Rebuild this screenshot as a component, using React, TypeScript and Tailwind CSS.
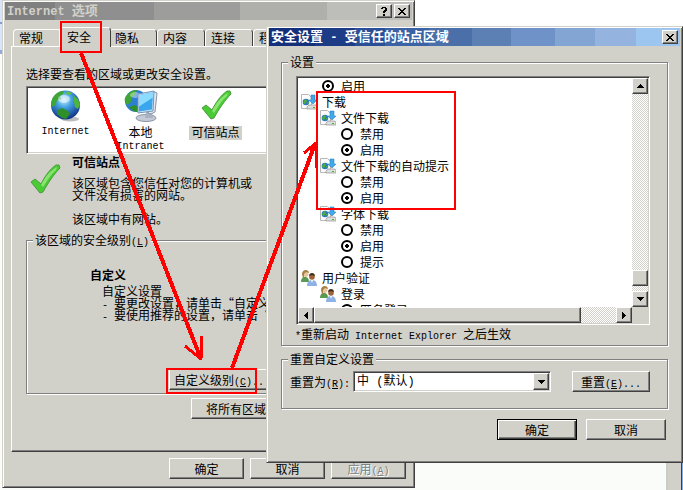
import { useState } from "react";
import type { ReactNode } from "react";
import clsx from "clsx";

const raised =
  "border border-t-white border-l-white border-r-[#404040] border-b-[#404040] bg-[#d2d1c9] shadow-[inset_-1px_-1px_0_#808080]";
const sunken =
  "border border-t-[#808080] border-l-[#808080] border-r-white border-b-white shadow-[inset_1px_1px_0_#404040,inset_-1px_-1px_0_#d2d1c9]";
const frame =
  "border border-t-[#d2d1c9] border-l-[#d2d1c9] border-r-[#404040] border-b-[#404040] bg-[#d2d1c9] p-px shadow-[inset_1px_1px_0_#fff,inset_-1px_-1px_0_#808080]";
const checker =
  "bg-[repeating-conic-gradient(#ffffff_0_25%,#d2d1c9_0_50%)] bg-[length:2px_2px]";

// Latin text inside the Chinese labels
const Mono = ({ children }: { children: ReactNode }) => (
  <span className="font-['Liberation_Mono',monospace] text-[10px] leading-0">
    {children}
  </span>
);

const Hotkey = ({ letter }: { letter: string }) => (
  <Mono>
    (<u>{letter}</u>)
  </Mono>
);

const Button = ({
  children,
  className,
  disabled,
}: {
  children: ReactNode;
  className?: string;
  disabled?: boolean;
}) => (
  <button
    type="button"
    disabled={disabled}
    className={clsx(
      "h-[21px] shrink-0 whitespace-nowrap leading-4",
      raised,
      disabled && "text-[#808080] [text-shadow:1px_1px_0_#fff]",
      className,
    )}
  >
    {children}
  </button>
);

const Group = ({
  legend,
  children,
  className,
}: {
  legend: ReactNode;
  children: ReactNode;
  className?: string;
}) => (
  <fieldset
    className={clsx(
      "min-w-0 border border-[#808080] shadow-[1px_1px_0_#fff,inset_1px_1px_0_#fff]",
      className,
    )}
  >
    <legend className="h-4 bg-[#d2d1c9] px-0.5 leading-4">{legend}</legend>
    {children}
  </fieldset>
);

const CaptionButton = ({
  label,
  children,
}: {
  label: string;
  children: ReactNode;
}) => (
  <button
    type="button"
    aria-label={label}
    className={clsx("flex h-3.5 w-4 items-center justify-center", raised)}
  >
    {children}
  </button>
);

const CloseGlyph = () => (
  <svg width="8" height="7" viewBox="0 0 8 7" shapeRendering="crispEdges">
    <path
      d="M0 0h2v1h1v1h2v-1h1v-1h2v1h-1v1h-1v1h-1v1h1v1h1v1h1v1h-2v-1h-1v-1h-2v1h-1v1h-2v-1h1v-1h1v-1h1v-1h-1v-1h-1v-1h-1z"
      fill="#000"
    />
  </svg>
);

const HelpGlyph = () => (
  <svg width="7" height="9" viewBox="0 0 7 9" shapeRendering="crispEdges">
    <path
      d="M1 0h4v1h1v3h-1v1h-1v1h-2v-2h1v-1h1v-2h-2v1h-2v-1h1zM2 7h2v2h-2z"
      fill="#000"
    />
  </svg>
);

const Globe = () => (
  <svg width="32" height="32" viewBox="0 0 32 32">
    <defs>
      <radialGradient id="sea" cx="45%" cy="32%" r="65%">
        <stop offset="0" stopColor="#c4efff" />
        <stop offset="0.4" stopColor="#45a3e0" />
        <stop offset="1" stopColor="#12398c" />
      </radialGradient>
    </defs>
    <ellipse cx="20" cy="29" rx="9" ry="2.5" fill="#bdbdbd" />
    <circle cx="15.5" cy="15" r="14.5" fill="url(#sea)" />
    <path
      d="M4 6C7 2 11 1 14 1l-1 3-3 2 1 3-4 1-1 4-3 3-2-2c0-3 1-7 3-9z"
      fill="#3fa535"
    />
    <path d="M7 20l5-2 6 3 2 3-4 5-4-1-5-4z" fill="#2f8f2a" />
    <path d="M24 6l4 3 2 6-2 4-3-2-1-5z" fill="#4fb43b" />
    <path d="M17 1l5 2-2 2-4-1z" fill="#5fc04a" />
    <ellipse cx="14" cy="9" rx="6" ry="4" fill="#fff" opacity="0.5" />
  </svg>
);

const IntranetIcon = () => (
  <svg width="34" height="32" viewBox="0 0 34 32">
    <circle cx="12" cy="11" r="11" fill="#2f7fd0" />
    <path d="M3 5c3-4 7-5 10-5l-2 5-3 2-1 5-4 3-2-3c-1-3 0-5 2-7z" fill="#3fa535" />
    <path d="M5 17l6-2 4 3-2 4-4-1z" fill="#2f8f2a" />
    <ellipse cx="11" cy="5" rx="5" ry="3" fill="#fff" opacity="0.4" />
    <ellipse cx="22" cy="28" rx="10" ry="3.5" fill="#c5cbd6" stroke="#8c93a3" />
    <path d="M22 22h6l1 6h-8z" fill="#a9b2c2" />
    <path d="M28 3l3-1 2 1-2 19-4 2-3-1z" fill="#e3e8ef" stroke="#8793a8" />
    <path d="M14 4l16-3-1 20-15 2z" fill="#cfe2f2" stroke="#6f95bd" />
    <path d="M15 5l14-2.500-1 17-13 2z" fill="#3aa6ee" />
    <path d="M15 5l14-2.500v5l-14 9z" fill="#8bdcff" />
  </svg>
);

const CheckIcon = () => (
  <svg width="32" height="32" viewBox="0 0 32 32">
    <path
      d="M2 18l4-3 6 5C16 12 21 5 27 1h3l1 3C25 10 19 19 14 28l-3 1z"
      fill="#48cb35"
      stroke="#4d9b3e"
      strokeWidth="1"
    />
    <path d="M12 21C16 13 21 7 28 3l-1 3c-5 4-9 11-13 17z" fill="#8ae46f" />
  </svg>
);

const DownloadIcon = () => (
  <svg width="16" height="16" viewBox="0 0 16 16">
    <path d="M.5.5h7l3 3v11h-10z" fill="#fbfbfb" stroke="#b8b8b8" />
    <circle cx="5" cy="8" r="3.3" fill="#2b78c2" />
    <path d="M3 6l2-1 1 2-2 3-2-1zM6 8l2 0-1 3z" fill="#4dac3d" />
    <path d="M10 1h4v5h2l-4 4-4-4h2z" fill="#3fa9ea" stroke="#1c78b8" strokeWidth=".5" />
    <path d="M8 11h7l1 2v2H6v-2z" fill="#dedede" stroke="#8f8f8f" strokeWidth=".7" />
    <path d="M12 13.500h2" stroke="#3db82e" />
  </svg>
);

const UsersIcon = () => (
  <svg width="16" height="16" viewBox="0 0 16 16">
    <path d="M0 12c0-4 2-5 4-5s4 1 4 5z" fill="#5b9a52" />
    <circle cx="4.500" cy="4" r="3" fill="#e9c79a" />
    <path d="M1 4c0-5 7-5 7-1L5 2 3 4v4H2z" fill="#a58148" />
    <path d="M6 16c0-4 2-6 5-6s5 2 5 6z" fill="#8fb2e6" />
    <circle cx="11" cy="7" r="2.800" fill="#9c6238" />
    <path d="M8 6c0-4 6-4 6 0l-3-1z" fill="#3d2a1c" />
    <path d="M10 10l1 3 1-3z" fill="#fff" />
  </svg>
);

const tabs = ["常规", "安全", "隐私", "内容", "连接", "程序"];

const InternetOptions = () => (
  <section
    className={clsx("absolute top-0 left-0.5 w-[413px]", frame)}
    aria-label="Internet 选项"
  >
    <header className="mx-px flex h-[18px] items-center gap-0.5 bg-[linear-gradient(90deg,#808080_0_50px,#8f8f8f_50px_149px,#9d9d9b_149px_235px,#afb0ab_235px_322px,#bdbeba_322px)] pr-0.5 pl-0.5">
      <h1 className="flex-1 text-[13px] leading-4 font-bold text-[#d2d1c9]">
        <span className="font-['Liberation_Mono',monospace] text-xs">
          Internet{" "}
        </span>
        选项
      </h1>
      <CaptionButton label="帮助">
        <HelpGlyph />
      </CaptionButton>
      <CaptionButton label="关闭">
        <CloseGlyph />
      </CaptionButton>
    </header>

    <div className="px-[7px] pt-[7px] pb-[7px]">
      <div role="tablist" className="flex h-[19px] items-end pl-0.5">
        {tabs.map((tab) => {
          const selected = tab === "安全";
          return (
            <button
              key={tab}
              type="button"
              role="tab"
              aria-selected={selected}
              className={clsx(
                "shrink-0 rounded-t-sm border border-b-0 border-t-white border-l-white border-r-[#404040] bg-[#d2d1c9] text-left leading-4",
                selected
                  ? "relative -mx-0.5 -mb-px h-5 w-[52px] pb-0.5 pl-[7px]"
                  : "h-[17px] w-12 pl-[5px]",
              )}
            >
              {tab}
            </button>
          );
        })}
      </div>

      <div
        role="tabpanel"
        className={clsx("px-3.5 pt-[19px] pb-8", raised)}
      >
        <p className="leading-4">选择要查看的区域或更改安全设置。</p>
        <ul
          className={clsx("mt-1 flex h-[68px] bg-white px-px pt-[3px]", sunken)}
        >
          <li className="flex w-[75px] flex-col items-center gap-1">
            <Globe />
            <Mono>
              <span className="block leading-3">Internet</span>
            </Mono>
          </li>
          <li className="flex w-[75px] flex-col items-center gap-1 text-center">
            <IntranetIcon />
            <span>
              本地
              <br />
              <Mono>Intranet</Mono>
            </span>
          </li>
          <li className="flex w-[75px] flex-col items-center gap-1">
            <CheckIcon />
            <span className="bg-[#d2d1c9] px-0.5 pb-0.5">可信站点</span>
          </li>
        </ul>

        <div className="mt-0.5 flex gap-[11px] pl-[3px]">
          <div className="pt-2">
            <CheckIcon />
          </div>
          <div>
            <h2 className="font-bold">可信站点</h2>
            <p className="mt-[9px]">
              该区域包含您信任对您的计算机或
              <br />
              文件没有损害的网站。
            </p>
            <p className="mt-3">该区域中有网站。</p>
          </div>
        </div>

        <Group
          className="mt-[7px] px-1.5 pb-[3px]"
          legend={
            <>
              该区域的安全级别
              <Hotkey letter="L" />
            </>
          }
        >
          <h2 className="mt-[21px] ml-[57px] font-bold">自定义</h2>
          <div className="mt-1 ml-[69px] whitespace-nowrap">
            <p>自定义设置</p>
            <p>
              <Mono>- </Mono>要更改设置，请单击“自定义级别”
            </p>
            <p>
              <Mono>- </Mono>要使用推荐的设置，请单击“默认级别”
            </p>
          </div>
          <Button className="mt-12 ml-[136px] block w-[110px] pl-1 text-left">
            自定义级别
            <Hotkey letter="C" />
            <Mono>...</Mono>
          </Button>
        </Group>
        <Button className="mt-1 ml-auto block w-[200px] pl-3.5 text-left">
          将所有区域重置为默认级别
          <Hotkey letter="R" />
        </Button>
      </div>

      <footer className="mt-1.5 flex justify-end gap-1.5">
        <Button className="w-[75px]">确定</Button>
        <Button className="w-[75px]">取消</Button>
        <Button className="w-[75px]" disabled>
          应用
          <Hotkey letter="A" />
        </Button>
      </footer>
    </div>
  </section>
);

type Row = {
  level: 1 | 2 | 3;
  label: string;
  kind: "download" | "users" | "radio";
  group?: string;
  on?: boolean;
};

const rows: Row[] = [
  { level: 2, label: "启用", kind: "radio", group: "prev", on: true },
  { level: 1, label: "下载", kind: "download" },
  { level: 2, label: "文件下载", kind: "download" },
  { level: 3, label: "禁用", kind: "radio", group: "file" },
  { level: 3, label: "启用", kind: "radio", group: "file", on: true },
  { level: 2, label: "文件下载的自动提示", kind: "download" },
  { level: 3, label: "禁用", kind: "radio", group: "prompt" },
  { level: 3, label: "启用", kind: "radio", group: "prompt", on: true },
  { level: 2, label: "字体下载", kind: "download" },
  { level: 3, label: "禁用", kind: "radio", group: "font" },
  { level: 3, label: "启用", kind: "radio", group: "font", on: true },
  { level: 3, label: "提示", kind: "radio", group: "font" },
  { level: 1, label: "用户验证", kind: "users" },
  { level: 2, label: "登录", kind: "users" },
  { level: 3, label: "匿名登录", kind: "radio", group: "login" },
];

const indent = { 1: "pl-[3px]", 2: "pl-[22px]", 3: "pl-[41px]" };

const SettingRow = ({ row }: { row: Row }) => {
  const rowClass = clsx("flex h-4 items-center gap-[5px]", indent[row.level]);
  if (row.kind === "radio") {
    return (
      <label className={rowClass}>
        <span className="flex w-4 justify-center">
          <input
            type="radio"
            name={row.group}
            defaultChecked={row.on}
            className="h-3 w-3 appearance-none rounded-full border-2 border-black bg-white checked:bg-[radial-gradient(circle,#000_0_2px,#fff_2px)]"
          />
        </span>
        {row.label}
      </label>
    );
  }
  return (
    <div className={rowClass}>
      {row.kind === "download" ? <DownloadIcon /> : <UsersIcon />}
      {row.label}
    </div>
  );
};

const arrows = {
  up: "M3 0h1v1h1v1h1v1h1v1h-7v-1h1v-1h1v-1h1z",
  down: "M0 0h7v1h-1v1h-1v1h-1v1h-1v-1h-1v-1h-1v-1h-1z",
  left: "M4 0v7h-1v-1h-1v-1h-1v-1h-1v-1h1v-1h1v-1h1v-1z",
  right: "M0 0h1v1h1v1h1v1h1v1h-1v1h-1v1h-1v1h-1z",
};

const ArrowGlyph = ({ dir }: { dir: keyof typeof arrows }) => {
  const flat = dir === "up" || dir === "down";
  return (
    <svg
      width={flat ? 7 : 4}
      height={flat ? 4 : 7}
      viewBox={flat ? "0 0 7 4" : "0 0 4 7"}
      shapeRendering="crispEdges"
    >
      <path d={arrows[dir]} />
    </svg>
  );
};

const ScrollButton = ({
  dir,
  label,
}: {
  dir: keyof typeof arrows;
  label: string;
}) => (
  <button
    type="button"
    aria-label={label}
    className={clsx("flex size-4 shrink-0 items-center justify-center", raised)}
  >
    <ArrowGlyph dir={dir} />
  </button>
);

const SecuritySettings = () => {
  const [level, setLevel] = useState("medium");

  return (
    <section
      className={clsx("absolute top-[26px] right-0 left-[266px]", frame)}
      aria-label="安全设置"
    >
      <header className="mx-px flex h-[18px] items-center bg-[linear-gradient(90deg,#14307a_0_46px,#1d3c86_46px_86px,#2a4f96_86px_116px,#3a62a4_116px_160px,#4b6fa9_160px_203px,#5d80b4_203px_242px,#6f92c8_242px_286px,#82a5d4_286px_326px,#94b3de_326px_367px,#9cc6f0_367px)] px-0.5">
        <h1 className="flex-1 text-[13px] leading-4 font-bold text-white">
          安全设置
          <span className="font-['Liberation_Mono',monospace] text-xs">
            {" - "}
          </span>
          受信任的站点区域
        </h1>
        <CaptionButton label="关闭">
          <CloseGlyph />
        </CaptionButton>
      </header>

      <div className="px-[13px] pt-2 pb-[21px]">
        <Group className="pr-[17px] pb-[3px] pl-1.5" legend="设置">
          <div className={clsx("mt-1.5 ml-2 bg-[#d2d1c9] p-px", sunken)}>
            <div className="flex h-[229px]">
              <div className="h-full flex-1 overflow-hidden bg-white">
                {rows.map((row, i) => (
                  <SettingRow key={i} row={row} />
                ))}
              </div>
              <div className={clsx("flex w-4 flex-col", checker)}>
                <ScrollButton dir="up" label="向上" />
                <div className="flex-1" />
                <div className={clsx("mb-[5px] h-4", raised)} />
                <ScrollButton dir="down" label="向下" />
              </div>
            </div>
            <div className={clsx("mr-4 flex h-4", checker)}>
              <ScrollButton dir="left" label="向左" />
              <div className={clsx("flex-1", raised)} />
              <div className="w-[35px]" />
              <ScrollButton dir="right" label="向右" />
            </div>
          </div>
          <p className="mt-px ml-[7px] leading-4">
            <Mono>*</Mono>重新启动<Mono> Internet Explorer </Mono>之后生效
          </p>
        </Group>

        <Group
          className="mt-[5px] pr-[17px] pb-4 pl-1.5"
          legend="重置自定义设置"
        >
          <div className="mt-1 ml-0.5 flex items-center">
            <label htmlFor="reset-level" className="w-[63px]">
              重置为
              <Hotkey letter="R" />
              <Mono>:</Mono>
            </label>
            <div className="relative w-[198px]">
              <select
                id="reset-level"
                value={level}
                onChange={(e) => setLevel(e.target.value)}
                className={clsx(
                  "block h-[21px] w-full appearance-none bg-white pl-[3px] font-['Liberation_Mono','Noto_Sans_CJK_SC',monospace] leading-4",
                  sunken,
                )}
              >
                <option value="high">高</option>
                <option value="medium">中 (默认)</option>
                <option value="low">低</option>
              </select>
              <span
                className={clsx(
                  "pointer-events-none absolute top-0.5 right-0.5 bottom-0.5 flex w-4 items-center justify-center",
                  raised,
                )}
              >
                <ArrowGlyph dir="down" />
              </span>
            </div>
            <Button className="ml-auto w-[78px]">
              重置
              <Hotkey letter="E" />
              <Mono>...</Mono>
            </Button>
          </div>
        </Group>

        <footer className="mt-2.5 flex justify-end gap-[9px] pr-0.5">
          <button
            type="button"
            className="h-[21px] w-20 border border-black bg-[#d2d1c9] leading-4 shadow-[inset_1px_1px_0_#fff,inset_-1px_-1px_0_#404040,inset_-2px_-2px_0_#808080]"
          >
            确定
          </button>
          <Button className="w-20">取消</Button>
        </footer>
      </div>
    </section>
  );
};

// Red boxes and arrows that walk through the steps
const Annotations = () => (
  <svg
    className="pointer-events-none absolute top-0 left-0"
    width="683"
    height="490"
    viewBox="0 0 683 490"
    fill="none"
    stroke="#fe0000"
    shapeRendering="crispEdges"
  >
    <g strokeWidth="2">
      <rect x="61" y="22" width="40" height="30" />
      <rect x="317" y="92" width="138" height="117" />
      <rect x="167" y="369" width="89" height="24" />
    </g>
    <g strokeWidth="4" strokeLinejoin="bevel">
      <path d="M81 53L201 359" />
      <path d="M232 368L315 144" />
    </g>
    <g strokeWidth="3" strokeLinejoin="bevel">
      <path d="M185 346L201 359L202 336" />
      <path d="M304 153L316 143L316 168" />
    </g>
  </svg>
);

export default function App() {
  return (
    <main className="relative min-h-screen overflow-hidden bg-white font-['Noto_Sans_CJK_SC',sans-serif] text-xs leading-3 text-black">
      <div className="absolute inset-0 flex justify-between">
        <div className="w-0.5 bg-[linear-gradient(#d6e5fb_0_22px,#7f9fd6_22px_24px,#d6e5fb_24px_50px,#8fabdc_50px_54px,#f9fcf8_54px)]" />
        <div className="mt-[460px] flex flex-1 bg-[#f9fcf8]">
          <div className="ml-auto w-4 border-r border-l-2 border-r-[#404040] border-l-[#c9cbc6] bg-[#d2d1c9]" />
          <div className="w-px bg-[#7fb0ec]" />
        </div>
      </div>
      <InternetOptions />
      <SecuritySettings />
      <Annotations />
    </main>
  );
}
